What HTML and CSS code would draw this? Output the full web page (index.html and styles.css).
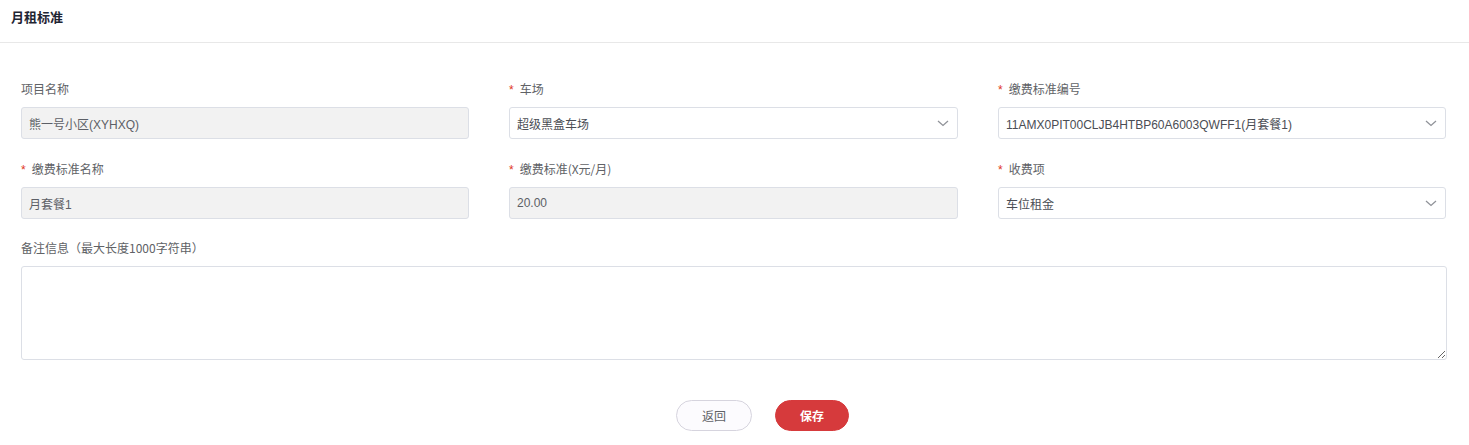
FILE: index.html
```html
<!DOCTYPE html>
<html lang="zh-CN">
<head>
<meta charset="utf-8">
<title>月租标准</title>
<link rel="stylesheet" href="styles.css">
</head>
<body>
<div class="page">
  <div class="header">月租标准</div>
  <form class="form">
    <div class="grid">
      <div class="field">
        <label class="label">项目名称</label>
        <div class="input disabled">熊一号小区(XYHXQ)</div>
      </div>
      <div class="field">
        <label class="label"><span class="req">*</span>车场</label>
        <div class="input select">超级黑盒车场<svg class="chev" viewBox="0 0 12 7" width="12" height="7"><path d="M1 1l5 4.5L11 1" fill="none" stroke="#909399" stroke-width="1.3"/></svg></div>
      </div>
      <div class="field">
        <label class="label"><span class="req">*</span>缴费标准编号</label>
        <div class="input select">11AMX0PIT00CLJB4HTBP60A6003QWFF1(月套餐1)<svg class="chev" viewBox="0 0 12 7" width="12" height="7"><path d="M1 1l5 4.5L11 1" fill="none" stroke="#909399" stroke-width="1.3"/></svg></div>
      </div>
      <div class="field">
        <label class="label"><span class="req">*</span>缴费标准名称</label>
        <div class="input disabled">月套餐1</div>
      </div>
      <div class="field">
        <label class="label"><span class="req">*</span>缴费标准(X元/月)</label>
        <div class="input disabled">20.00</div>
      </div>
      <div class="field">
        <label class="label"><span class="req">*</span>收费项</label>
        <div class="input select">车位租金<svg class="chev" viewBox="0 0 12 7" width="12" height="7"><path d="M1 1l5 4.5L11 1" fill="none" stroke="#909399" stroke-width="1.3"/></svg></div>
      </div>
    </div>
    <div class="field full">
      <label class="label">备注信息（最大长度1000字符串）</label>
      <textarea class="textarea"></textarea>
    </div>
    <div class="actions">
      <button type="button" class="btn back">返回</button>
      <button type="button" class="btn save">保存</button>
    </div>
  </form>
</div>
</body>
</html>
```
FILE: styles.css
```css
* { box-sizing: border-box; }
html, body { margin: 0; padding: 0; background: #fff; }
body {
  font-family: "Noto Sans CJK SC", "Liberation Sans", sans-serif;
  font-size: 12px;
  color: #606266;
}
.page { width: 1469px; }
.header {
  height: 43px;
  padding: 7px 0 0 11px;
  font-size: 13px;
  font-weight: 700;
  color: #1f2533;
  border-bottom: 1px solid #e8e8e8;
  line-height: 20px;
}
.form { padding: 37px 23px 0 21px; }
.grid {
  display: grid;
  grid-template-columns: 448px 449px 448px;
  column-gap: 40px;
  row-gap: 21px;
}
.field { display: flex; flex-direction: column; }
.label {
  height: 18px;
  line-height: 18px;
  margin-bottom: 9px;
  font-size: 12px;
  color: #606266;
}
.req {
  color: #e0361b;
  margin-right: 6px;
  font-family: "Liberation Sans", sans-serif;
}
.input {
  height: 32px;
  border: 1px solid #dcdfe6;
  border-radius: 3px;
  padding: 0 7px;
  display: flex;
  align-items: center;
  font-family: "Liberation Sans", "Noto Sans CJK SC", sans-serif;
  font-size: 12px;
  color: #4a4d54;
}
.input.disabled { background: #f2f2f2; color: #5c5f66; }
.input.select { justify-content: space-between; background: #fff; }
.chev { margin-right: 1px; }
.full { margin-top: 20px; }
.textarea {
  width: 1426px;
  height: 94px;
  border: 1px solid #dcdfe6;
  border-radius: 3px;
  resize: vertical;
  margin: 0;
  display: block;
}
.actions {
  display: flex;
  justify-content: center;
  gap: 23px;
  margin-top: 40px;
  padding-left: 58px;
}
.btn {
  height: 31px;
  border-radius: 16px;
  font-family: "Noto Sans CJK SC", sans-serif;
  font-size: 12px;
  cursor: pointer;
  padding: 0;
}
.back {
  width: 76px;
  background: #fcfbfe;
  border: 1px solid #d6d4de;
  color: #606266;
}
.save {
  width: 74px;
  background: #d63a3c;
  border: 1px solid #d63a3c;
  color: #fff;
  font-weight: 700;
}
```
